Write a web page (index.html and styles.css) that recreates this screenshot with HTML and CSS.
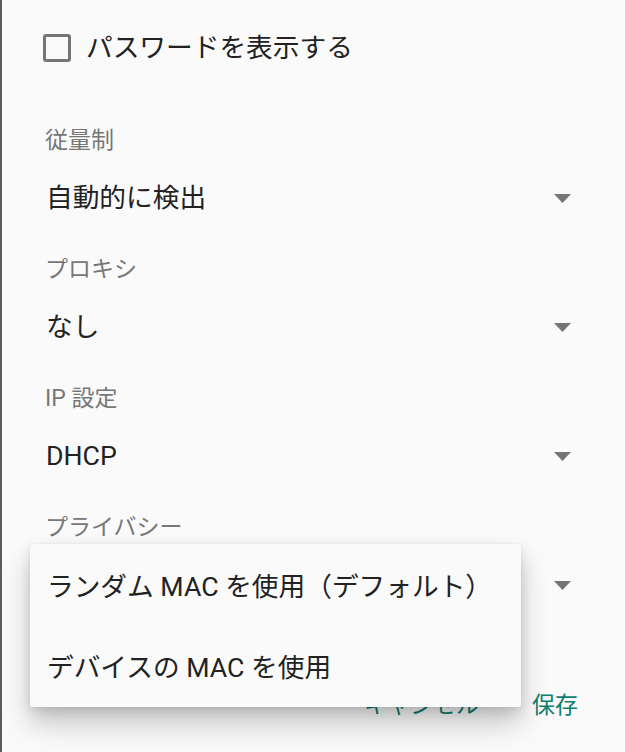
FILE: index.html
```html
<!DOCTYPE html>
<html lang="ja">
<head>
<meta charset="utf-8">
<link rel="stylesheet" href="styles.css">
</head>
<body>
<div class="dialog">
  <div class="check-row">
    <span class="checkbox"></span>
    <span class="check-label">パスワードを表示する</span>
  </div>

  <div class="field">
    <div class="label">従量制</div>
    <div class="select">
      <span class="value">自動的に検出</span>
      <svg class="arrow" width="17" height="9" viewBox="0 0 17 9"><polygon points="0,0 17,0 8.5,9" fill="#757575"/></svg>
    </div>
  </div>

  <div class="field">
    <div class="label">プロキシ</div>
    <div class="select">
      <span class="value">なし</span>
      <svg class="arrow" width="17" height="9" viewBox="0 0 17 9"><polygon points="0,0 17,0 8.5,9" fill="#757575"/></svg>
    </div>
  </div>

  <div class="field">
    <div class="label">IP 設定</div>
    <div class="select">
      <span class="value">DHCP</span>
      <svg class="arrow" width="17" height="9" viewBox="0 0 17 9"><polygon points="0,0 17,0 8.5,9" fill="#757575"/></svg>
    </div>
  </div>

  <div class="field">
    <div class="label">プライバシー</div>
    <div class="select">
      <span class="value"></span>
      <svg class="arrow" width="17" height="9" viewBox="0 0 17 9"><polygon points="0,0 17,0 8.5,9" fill="#757575"/></svg>
    </div>
  </div>

  <div class="actions">
    <span class="btn">キャンセル</span>
    <span class="btn">保存</span>
  </div>
</div>

<div class="menu">
  <div class="menu-item">ランダム MAC を使用（デフォルト）</div>
  <div class="menu-item">デバイスの MAC を使用</div>
</div>
</body>
</html>
```

FILE: styles.css
```css
html, body {
  margin: 0;
  padding: 0;
  height: 100%;
  background: #fafafa;
  overflow: hidden;
}

body {
  font-family: Roboto, "Noto Sans CJK JP", sans-serif;
  color: #222222;
}

.dialog {
  height: 752px;
  box-sizing: border-box;
  border-left: 2px solid #5c5c5c;
  padding: 20px 54px 0 43px;
}

.check-row {
  height: 56px;
  display: flex;
  align-items: center;
  margin-left: -2px;
}

.checkbox {
  width: 28px;
  height: 28px;
  box-sizing: border-box;
  border: 3.5px solid #757575;
  border-radius: 3px;
  flex: none;
}

.check-label {
  margin-left: 15px;
  font-size: 26.7px;
  line-height: 32px;
  color: #222222;
}

.field {
  margin-top: 50px;
}

.field + .field {
  margin-top: 29px;
}

.label {
  font-size: 23px;
  line-height: 30px;
  height: 30px;
  color: #777777;
}

.select {
  margin-top: 14px;
  height: 56px;
  display: flex;
  align-items: center;
  justify-content: space-between;
}

.value {
  font-size: 26.7px;
  line-height: 32px;
  margin-left: 1px;
  color: #222222;
}

.arrow {
  flex: none;
  display: block;
}

.actions {
  display: flex;
  justify-content: flex-end;
  gap: 53px;
  margin-top: 78px;
  margin-right: -7px;
}

.btn {
  font-size: 23px;
  line-height: 30px;
  color: #0f7d70;
}

.menu {
  position: absolute;
  left: 30px;
  top: 544px;
  width: 491px;
  height: 163px;
  background: #fafafa;
  border-radius: 3px;
  box-shadow: 0 16px 28px rgba(0, 0, 0, 0.22), 0 5px 12px rgba(0, 0, 0, 0.10), 0 0 3px rgba(0, 0, 0, 0.06);
}

.menu-item {
  height: 81px;
  display: flex;
  align-items: center;
  padding-left: 17px;
  font-size: 26.7px;
  color: #222222;
}
```
